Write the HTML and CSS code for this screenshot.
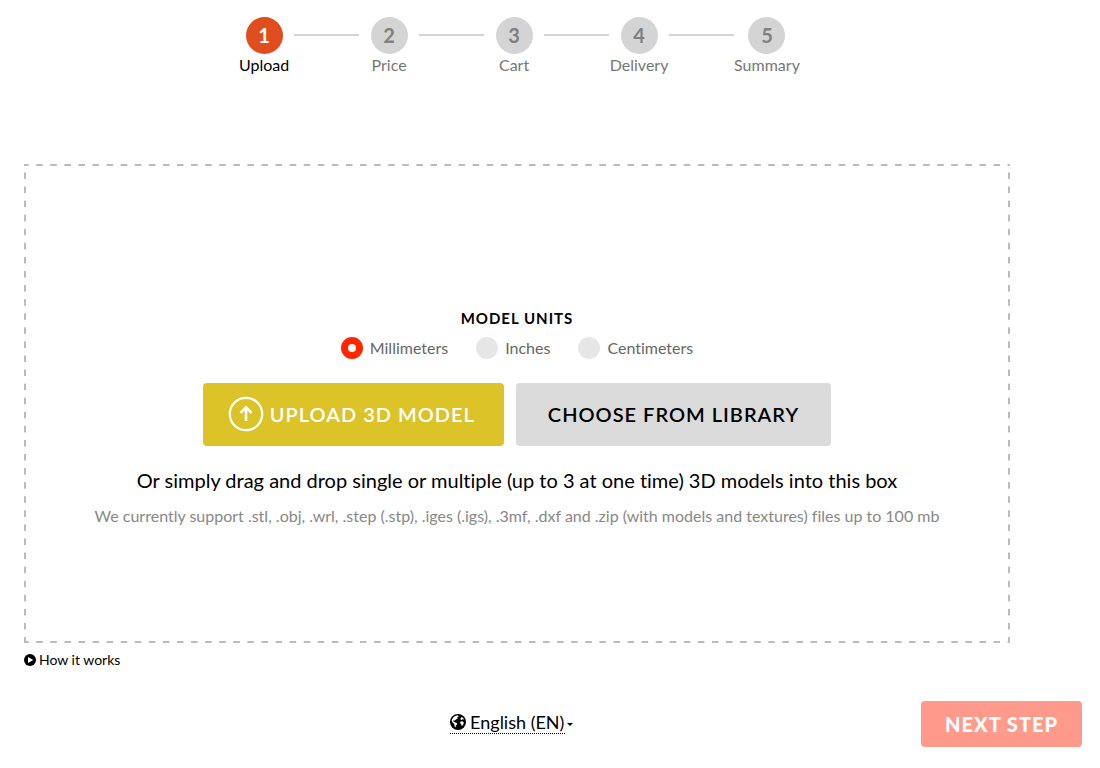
FILE: index.html
```
<!DOCTYPE html>
<html lang="en">
<head>
<meta charset="UTF-8">
<meta name="viewport" content="width=device-width, initial-scale=1">
<title>Upload 3D model</title>
<link rel="stylesheet" href="styles.css">
</head>
<body>

<main>
  <ol class="steps">
    <li class="step active"><span class="number">1</span>Upload</li>
    <li class="line" aria-hidden="true"></li>
    <li class="step"><span class="number">2</span>Price</li>
    <li class="line" aria-hidden="true"></li>
    <li class="step"><span class="number">3</span>Cart</li>
    <li class="line" aria-hidden="true"></li>
    <li class="step"><span class="number">4</span>Delivery</li>
    <li class="line" aria-hidden="true"></li>
    <li class="step"><span class="number">5</span>Summary</li>
  </ol>

  <section class="dropzone">
    <fieldset class="units">
      <legend>MODEL UNITS</legend>
      <div class="options">
        <label><input type="radio" name="units" value="mm" checked>Millimeters</label>
        <label><input type="radio" name="units" value="in">Inches</label>
        <label><input type="radio" name="units" value="cm">Centimeters</label>
      </div>
    </fieldset>

    <div class="buttons">
      <button type="button" class="btn upload">
        <svg width="36" height="36" viewBox="0 0 36 36" fill="none" stroke="#fff" aria-hidden="true">
          <circle cx="18" cy="18" r="16.2" stroke-width="2.2"/>
          <path d="M18 25V12M12.500 16.800L18 11.300L23.500 16.800" stroke-width="2.600"/>
        </svg>
        UPLOAD 3D MODEL
      </button>
      <button type="button" class="btn library">CHOOSE FROM LIBRARY</button>
    </div>

    <p class="drag">Or simply drag and drop single or multiple (up to 3 at one time) 3D models into this box</p>
    <p class="formats">We currently support .stl, .obj, .wrl, .step (.stp), .iges (.igs), .3mf, .dxf and .zip (with models and textures) files up to 100 mb</p>
  </section>

  <a href="#" class="how">
    <svg width="12" height="12" viewBox="0 0 12 12" aria-hidden="true">
      <circle cx="6" cy="6" r="6" fill="#000"/>
      <path d="M4 3L9.300 6L4 9Z" fill="#fff"/>
    </svg>
    How it works
  </a>
</main>

<footer>
  <div class="language">
    <div class="current">
      <svg width="16" height="16" viewBox="0 0 16 16" aria-hidden="true">
        <circle cx="8" cy="8" r="8" fill="#000"/>
        <path d="M2.500 4.500L4.500 2.200L7.500 1.300L8.800 2.300L7.200 3.400L7.600 4.400L5.800 5.400L5 6.600L3.600 6.200L3.200 7.200L4.800 8.200L6.800 9L7.200 10.200L6 11.600L5.300 13.500L4.500 12L4.300 10L2.600 8.400L1.600 6.600Z" fill="#fff"/>
        <path d="M11 3.200L12.800 3.600L14.200 5.600L12.800 5.200L11.500 6L10.400 5.200ZM10.500 7.500L12.400 7.300L14 8.800L13 11L11.700 12L11.200 10.200L10 9Z" fill="#fff"/>
      </svg>
      <select aria-label="Language">
        <option>English (EN)</option>
      </select>
    </div>
    <span class="caret"></span>
  </div>
  <button type="button" class="next">NEXT STEP</button>
</footer>

</body>
</html>
```
FILE: styles.css
```
* {
  box-sizing: border-box;
}

body {
  margin: 0;
  background: #fff;
  color: #000;
  font-family: Lato, "Open Sans", sans-serif;
  font-size: 16px;
  font-variant-ligatures: none;
  line-height: 20px;
}

button,
select {
  font-family: inherit;
  border: 0;
  cursor: pointer;
}

main {
  padding: 17px 90px 0 24px;
}

/* progress steps */
.steps {
  display: flex;
  justify-content: center;
  margin: 0;
  padding: 0;
  list-style: none;
}

.step {
  display: flex;
  flex-direction: column;
  align-items: center;
  gap: 1px;
  min-width: 60px;
  color: #777;
}

.number {
  display: flex;
  align-items: center;
  justify-content: center;
  width: 37px;
  height: 37px;
  padding-bottom: 2px;
  border-radius: 50%;
  background: #d4d4d4;
  color: #808080;
  font-size: 20px;
  font-weight: bold;
}

.step.active { color: #000; }

.step.active .number {
  background: #e04e20;
  color: #fff;
}

.line {
  width: 65px;
  height: 2px;
  margin-top: 17px;
  background: #d4d4d4;
}

/* drop area, the long dashes are drawn with gradients */
.dropzone {
  --dash-x: linear-gradient(90deg, #bbb 5px, transparent 5px 12px, #bbb 12px);
  --dash-y: linear-gradient(#bbb 1px, transparent 1px 8px, #bbb 8px);
  display: flex;
  flex-direction: column;
  align-items: center;
  justify-content: center;
  min-height: 479px;
  margin-top: 89px;
  padding: 50px 24px 24px;
  text-align: center;
  background:
    var(--dash-x) 0 0 / 14px 2px round no-repeat,
    var(--dash-x) 0 100% / 14px 2px round no-repeat,
    var(--dash-y) 0 0 / 2px 14px no-repeat round,
    var(--dash-y) 100% 0 / 2px 14px no-repeat round;
}

.units {
  margin: 0;
  padding: 0;
  border: 0;
}

.units legend {
  margin: 0 auto;
  padding: 0;
  font-size: 15px;
  font-weight: bold;
  letter-spacing: 1px;
}

.options {
  display: flex;
  gap: 28px;
  margin-top: 9px;
}

.options label {
  display: flex;
  align-items: center;
  gap: 7px;
  color: #666;
  cursor: pointer;
}

.options input {
  appearance: none;
  width: 22px;
  height: 22px;
  margin: 0;
  border-radius: 50%;
  background: #e6e6e6;
}

.options input:checked {
  border: 7px solid #ff2600;
  background: #fff;
}

.buttons {
  display: flex;
  gap: 12px;
  margin-top: 24px;
}

.btn {
  display: flex;
  align-items: center;
  justify-content: center;
  gap: 6px;
  height: 63px;
  padding: 0 32px;
  border-radius: 4px;
  font-size: 20px;
  font-weight: 600;
  letter-spacing: 1px;
}

.upload {
  padding: 0 29px 0 25px;
  background: #dcc428;
  color: #fff;
}

.library {
  background: #dbdbdb;
  color: #000;
}

.drag {
  margin: 22px 0 0;
  font-size: 20px;
  line-height: 24px;
}

.formats {
  margin: 14px 0 0;
  color: #888;
}

.how {
  display: inline-flex;
  align-items: center;
  gap: 3px;
  margin-top: 7px;
  color: #000;
  font-size: 14px;
  text-decoration: none;
}

/* bottom bar */
footer {
  display: grid;
  grid-template-columns: 5fr auto 6fr;
  align-items: center;
  margin-top: 31px;
  padding: 0 18px 20px 26px;
}

.language {
  display: flex;
  grid-column: 2;
  align-items: center;
  gap: 2px;
  padding-bottom: 4px;
}

.current {
  display: flex;
  align-items: center;
  gap: 4px;
  border-bottom: 1px dotted #000;
}

.current select {
  appearance: none;
  padding: 0;
  background: none;
  color: #000;
  font-size: 18px;
  line-height: 22px;
}

.caret {
  margin-top: 4px;
  border: 3px solid transparent;
  border-top-color: #000;
  border-bottom: 0;
}

.next {
  justify-self: end;
  height: 46px;
  padding: 0 24px;
  border-radius: 4px;
  background: #ff9a8d;
  color: #fff;
  font-size: 20px;
  font-weight: 900;
  letter-spacing: 1px;
}
```
